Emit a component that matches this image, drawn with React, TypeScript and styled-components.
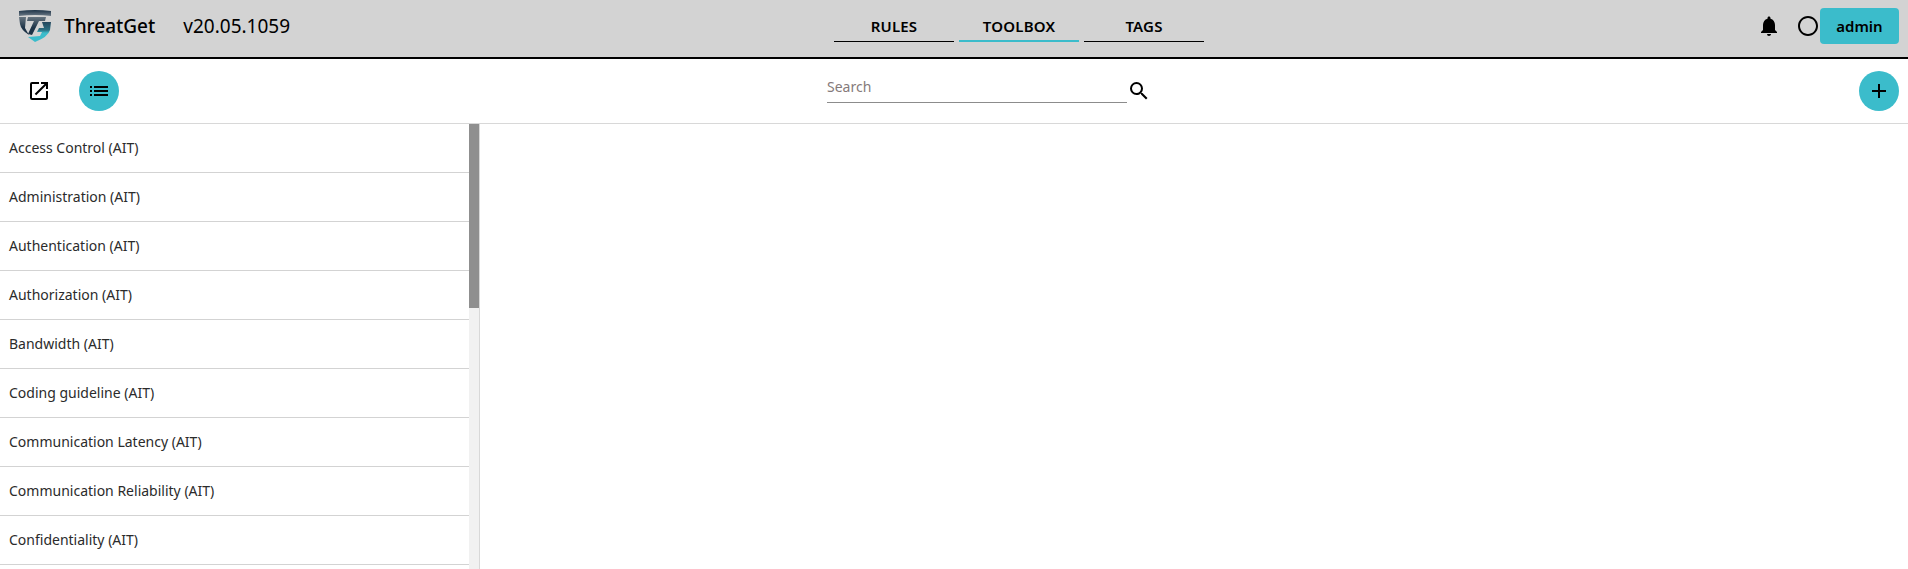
import React, { FC } from 'react';
import styled, { createGlobalStyle } from 'styled-components';
import {
  MdAdd,
  MdList,
  MdNotifications,
  MdOpenInNew,
  MdRadioButtonUnchecked,
  MdSearch,
} from 'react-icons/md';

const TEAL = '#3bbccb';

const categories = [
  'Access Control (AIT)',
  'Administration (AIT)',
  'Authentication (AIT)',
  'Authorization (AIT)',
  'Bandwidth (AIT)',
  'Coding guideline (AIT)',
  'Communication Latency (AIT)',
  'Communication Reliability (AIT)',
  'Confidentiality (AIT)',
];

const tabs = ['RULES', 'TOOLBOX', 'TAGS'];

const GlobalStyle = createGlobalStyle`
  html, body {
    margin: 0;
    height: 100%;
    overflow: hidden;
    background: #fff;
    font-family: 'Noto Sans', 'Open Sans', sans-serif;
  }
  #root {
    height: 100%;
  }
  * {
    box-sizing: border-box;
  }
`;

const Page = styled.div`
  display: flex;
  flex-direction: column;
  height: 569px;
  overflow: hidden;
`;

const Header = styled.header`
  display: flex;
  align-items: center;
  flex: none;
  height: 59px;
  padding: 0 9px 5px 19px;
  background: #d3d3d3;
  border-bottom: 2px solid #000;
`;

const Brand = styled.div`
  display: flex;
  align-items: center;
  width: 815px;
  color: #000;
`;

const BrandName = styled.span`
  margin-left: 12px;
  font-size: 19px;
  font-weight: 500;
`;

const Version = styled.span`
  margin-left: 28px;
  font-size: 19px;
`;

const Tabs = styled.nav`
  display: flex;
  gap: 5px;
`;

const Tab = styled.div<{ $active?: boolean }>`
  width: 120px;
  height: 32px;
  padding-top: 5px;
  line-height: 22px;
  text-align: center;
  font-size: 15px;
  font-weight: 600;
  letter-spacing: 0.2px;
  color: #000;
  border-bottom: ${({ $active }) => ($active ? `2px solid ${TEAL}` : '1px solid #000')};
`;

const UserArea = styled.div`
  display: flex;
  align-items: center;
  margin-left: auto;
  color: #000;
`;

const Bell = styled(MdNotifications)`
  margin-right: 15px;
`;

const AdminButton = styled.button`
  width: 79px;
  height: 36px;
  padding: 0;
  border: 0;
  border-radius: 4px;
  background: ${TEAL};
  color: #000;
  font: 600 15px 'Noto Sans', sans-serif;
`;

const Toolbar = styled.div`
  display: flex;
  align-items: center;
  flex: none;
  height: 65px;
  padding: 0 9px 0 27px;
  border-bottom: 1px solid #d8d8d8;
`;

const ToolbarLeft = styled.div`
  display: flex;
  align-items: center;
  gap: 28px;
  width: 800px;
`;

const RoundButton = styled.button`
  display: flex;
  align-items: center;
  justify-content: center;
  width: 40px;
  height: 40px;
  padding: 0;
  border: 0;
  border-radius: 50%;
  background: ${TEAL};
  color: #000;
`;

const PlainIcon = styled(MdOpenInNew)`
  flex: none;
  color: #000;
`;

const SearchBox = styled.div`
  display: flex;
  align-items: center;
`;

const SearchInput = styled.input`
  width: 300px;
  height: 29px;
  margin-bottom: 5px;
  padding: 0 0 3px;
  border: 0;
  border-bottom: 1px solid #8c8c8c;
  outline: 0;
  background: transparent;
  font: 14px 'Noto Sans', sans-serif;

  &::placeholder {
    color: #857a7a;
    opacity: 1;
  }
`;

const AddButton = styled(RoundButton)`
  margin-left: auto;
`;

const Sidebar = styled.aside`
  display: flex;
  flex: 1;
  min-height: 0;
  width: 480px;
  border-right: 1px solid #d8d8d8;
`;

const RowList = styled.div`
  flex: 1;
  min-width: 0;
  overflow: hidden;
`;

const Row = styled.div`
  display: flex;
  align-items: center;
  height: 49px;
  padding: 0 9px 2px;
  border-bottom: 1px solid #d3d3d3;
  font-size: 14px;
  color: #2b2b2b;
`;

const ScrollTrack = styled.div`
  flex: none;
  width: 10px;
  background: #f1f1f1;
`;

const ScrollThumb = styled.div`
  height: 184px;
  background: #8f8f8f;
`;

const Logo: FC = () => (
  <svg width="33" height="33" viewBox="0 0 33 33">
    <defs>
      <linearGradient id="band" x1="0" y1="0" x2="0" y2="1">
        <stop offset="0" stopColor="#1d3347" />
        <stop offset="1" stopColor="#6d7a86" />
      </linearGradient>
      <linearGradient id="steel" x1="0" y1="0" x2="0" y2="1">
        <stop offset="0" stopColor="#66747f" />
        <stop offset="0.6" stopColor="#1d3347" />
      </linearGradient>
      <linearGradient id="tealFade" x1="0" y1="0" x2="0" y2="1">
        <stop offset="0" stopColor="#24465c" />
        <stop offset="0.4" stopColor="#2b6f82" />
        <stop offset="0.55" stopColor={TEAL} />
      </linearGradient>
    </defs>
    <path d="M0 1 Q16 -1 32 1 L32 6 Q16 4 0 6 Z" fill="url(#band)" />
    <path d="M0 7 H7 L6 18 L10 25 Q2 20 1 14 Z" fill="url(#steel)" />
    <path d="M9 7 H27 L26 11 H20 L13 25 L9 24 L15 11 H8 Z" fill="url(#steel)" />
    <path d="M23 12 H32 L31 20 Q29 27 16 32 L9 27 L21 26 L23 22 H18 L20 18 H25 Z" fill="url(#tealFade)" />
  </svg>
);

const App: FC = () => (
  <Page>
    <GlobalStyle />
    <Header>
      <Brand>
        <Logo />
        <BrandName>ThreatGet</BrandName>
        <Version>v20.05.1059</Version>
      </Brand>
      <Tabs>
        {tabs.map((tab) => (
          <Tab key={tab} $active={tab === 'TOOLBOX'}>
            {tab}
          </Tab>
        ))}
      </Tabs>
      <UserArea>
        <Bell size={24} />
        <MdRadioButtonUnchecked size={24} />
        <AdminButton>admin</AdminButton>
      </UserArea>
    </Header>
    <Toolbar>
      <ToolbarLeft>
        <PlainIcon size={24} />
        <RoundButton>
          <MdList size={24} />
        </RoundButton>
      </ToolbarLeft>
      <SearchBox>
        <SearchInput placeholder="Search" />
        <MdSearch size={24} />
      </SearchBox>
      <AddButton>
        <MdAdd size={24} />
      </AddButton>
    </Toolbar>
    <Sidebar>
      <RowList>
        {categories.map((category) => (
          <Row key={category}>{category}</Row>
        ))}
      </RowList>
      <ScrollTrack>
        <ScrollThumb />
      </ScrollTrack>
    </Sidebar>
  </Page>
);

export default App;
